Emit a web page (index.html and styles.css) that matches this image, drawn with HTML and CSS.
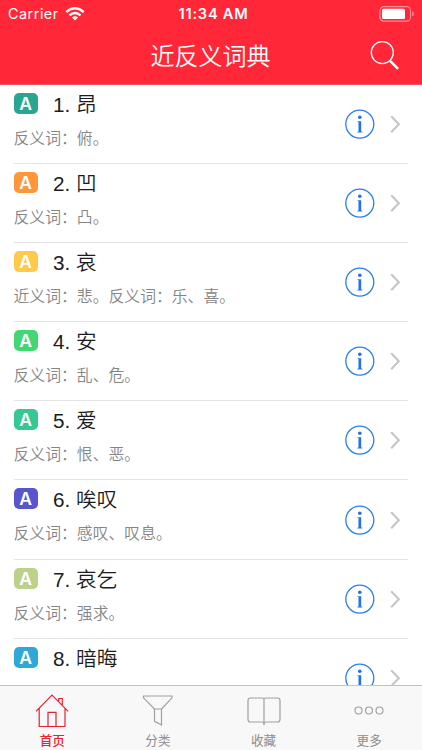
FILE: index.html
```html
<!DOCTYPE html>
<html lang="zh-CN">
<head>
<meta charset="utf-8">
<title>近反义词典</title>
<link rel="stylesheet" href="styles.css">
</head>
<body>
<svg class="defs" width="0" height="0">
  <symbol id="info" viewBox="0 0 30 30">
    <circle cx="14.8" cy="15.1" r="14" fill="none" stroke="#2b7de9" stroke-width="1.3"/>
    <circle cx="14.8" cy="8.3" r="1.8" fill="#1f73e3"/>
    <path d="M12.4 12.2H16.2V22.5L17.3 22.8V23.4H12.4V22.8L13.5 22.5V13.1L12.4 12.8Z" fill="#1f73e3"/>
  </symbol>
  <symbol id="chevron" viewBox="0 0 12 20">
    <path d="M1.2 2.2L8.8 10.2L1.2 18.2" fill="none" stroke="#c5c5ca" stroke-width="2.1"/>
  </symbol>
</svg>
<div class="app">
  <header class="header">
    <div class="status">
      <div class="carrier"><span>Carrier</span>
        <svg width="20" height="14" viewBox="0 0 20 14" fill="none" stroke="#fff" stroke-width="2.4"><path d="M1.3 5.1Q10 -2.4 18.7 5.1"/><path d="M4.5 8.4Q10 3.6 15.5 8.4"/><path d="M6.9 10.5Q10 7.9 13.1 10.5L10 13.5Z" fill="#fff" stroke="none"/></svg>
      </div>
      <div class="time">11:34 AM</div>
      <svg class="battery" width="36" height="16" viewBox="0 0 36 16"><rect x="1" y=".7" width="30.5" height="14.4" rx="3.8" fill="none" stroke="#ff8c96" stroke-width="1.2"/><rect x="3" y="2.7" width="23" height="10.4" rx="1.5" fill="#fff"/><path d="M33.1 5.3Q35 6.2 35 7.9T33.1 10.5Z" fill="#ff8c96"/></svg>
    </div>
    <div class="navbar">
      <h1>近反义词典</h1>
      <svg class="search" width="30" height="31" viewBox="0 0 30 31" fill="none" stroke="#fff"><circle cx="12.3" cy="12.6" r="11" stroke-width="1.3"/><path d="M19.8 20.6L28.1 28.8" stroke-width="2.5"/></svg>
    </div>
  </header>
  <main class="list">
    <article class="row"><div class="text"><div class="head"><span class="badge teal">A</span><h2>1. 昂</h2></div><p>反义词：俯。</p></div><svg class="info"><use href="#info"/></svg><svg class="chev"><use href="#chevron"/></svg></article>
    <article class="row"><div class="text"><div class="head"><span class="badge orange">A</span><h2>2. 凹</h2></div><p>反义词：凸。</p></div><svg class="info"><use href="#info"/></svg><svg class="chev"><use href="#chevron"/></svg></article>
    <article class="row"><div class="text"><div class="head"><span class="badge yellow">A</span><h2>3. 哀</h2></div><p>近义词：悲。反义词：乐、喜。</p></div><svg class="info"><use href="#info"/></svg><svg class="chev"><use href="#chevron"/></svg></article>
    <article class="row"><div class="text"><div class="head"><span class="badge green">A</span><h2>4. 安</h2></div><p>反义词：乱、危。</p></div><svg class="info"><use href="#info"/></svg><svg class="chev"><use href="#chevron"/></svg></article>
    <article class="row"><div class="text"><div class="head"><span class="badge mint">A</span><h2>5. 爱</h2></div><p>反义词：恨、恶。</p></div><svg class="info"><use href="#info"/></svg><svg class="chev"><use href="#chevron"/></svg></article>
    <article class="row"><div class="text"><div class="head"><span class="badge purple">A</span><h2>6. 唉叹</h2></div><p>反义词：感叹、叹息。</p></div><svg class="info"><use href="#info"/></svg><svg class="chev"><use href="#chevron"/></svg></article>
    <article class="row"><div class="text"><div class="head"><span class="badge lime">A</span><h2>7. 哀乞</h2></div><p>反义词：强求。</p></div><svg class="info"><use href="#info"/></svg><svg class="chev"><use href="#chevron"/></svg></article>
    <article class="row"><div class="text"><div class="head"><span class="badge blue">A</span><h2>8. 暗晦</h2></div></div><svg class="info"><use href="#info"/></svg><svg class="chev"><use href="#chevron"/></svg></article>
  </main>
  <nav class="tabs">
    <a class="tab active"><svg width="36" height="36" viewBox="0 0 36 36"><path d="M2 19.4L18 3L34.2 19.4M5.2 16.5V34.5H31V16.5M14 34.5V20.3H22V34.5M24.7 9V6.5H28.3V13"/></svg><span>首页</span></a>
    <a class="tab"><svg width="36" height="36" viewBox="0 0 36 36"><path d="M3.5 4H32V5.8L21.5 17V33L14.5 29.3V17L3.5 5.8ZM14.5 17H21.5"/></svg><span>分类</span></a>
    <a class="tab"><svg width="36" height="36" viewBox="0 0 36 36"><path d="M18 7.5Q18 6 16.2 6H4.5Q2 6 2 8.5V27.5Q2 30 4.5 30H15.8Q17.5 30 18 31.8Q18.5 30 20.2 30H31.5Q34 30 34 27.5V8.5Q34 6 31.5 6H19.8Q18 6 18 7.5V33"/></svg><span>收藏</span></a>
    <a class="tab"><svg width="36" height="36" viewBox="0 0 36 36"><circle cx="7.5" cy="18.5" r="3.5"/><circle cx="18" cy="18.5" r="3.5"/><circle cx="28.5" cy="18.5" r="3.5"/></svg><span>更多</span></a>
  </nav>
</div>
</body>
</html>
```
FILE: styles.css
```css
* { box-sizing: border-box; }
body { margin: 0; font-family: "Liberation Sans", "Noto Sans CJK SC", sans-serif; background: #fff; }
svg { display: block; flex: none; }
.defs { position: absolute; }
h1, h2, p { margin: 0; font-weight: 350; white-space: nowrap; }
.app { width: 422px; height: 750px; display: flex; flex-direction: column; overflow: hidden; }
.header { height: 84.5px; flex: none; background: #ff2738; color: #fff; border-bottom: 1px solid #e95566; }
.status { height: 28px; display: grid; grid-template-columns: 1fr auto 1fr; align-items: center; padding: 0 7px 0 8px; font-family: Inter, sans-serif; font-size: 14.4px; line-height: 28px; }
.carrier { display: flex; align-items: center; gap: 6px; letter-spacing: .5px; }
.time { margin-left: 4px; font-weight: 600; font-size: 14.6px; letter-spacing: .75px; }
.battery { justify-self: end; }
.navbar { height: 55px; display: grid; grid-template-columns: 1fr auto 1fr; align-items: center; padding-right: 22px; padding-left: 21px; }
.navbar h1 { grid-column: 2; margin-top: -2px; font-family: "Noto Sans CJK SC", sans-serif; font-size: 24px; line-height: 36px; }
.search { justify-self: end; }
.list { flex: 1; min-height: 0; overflow: hidden; }
.row { height: 79.2px; margin: 0 14px 0 13.5px; display: flex; align-items: center; border-bottom: 1px solid #e3e3e5; }
.text { flex: 1; align-self: stretch; padding-top: 4px; }
.head { display: flex; align-items: center; height: 32px; gap: 15.5px; }
.badge { width: 24px; height: 21px; margin-top: -3px; border-radius: 5px; color: #fff; font-family: Inter, sans-serif; font-weight: 600; font-size: 17.5px; line-height: 21px; text-align: center; }
.teal { background: #2aa591; }
.orange { background: #ff9637; }
.yellow { background: #ffc94a; }
.green { background: #43d774; }
.mint { background: #35c892; }
.purple { background: #5855ce; }
.lime { background: #bdd18a; }
.blue { background: #30a8d7; }
h2 { font-size: 20.7px; line-height: 32px; color: #1c1c1c; }
.text p { margin-top: 5px; font-family: "Noto Sans CJK SC", sans-serif; font-size: 15.83px; line-height: 24px; color: #858585; }
.info { width: 30px; height: 30px; }
.chev { width: 12px; height: 20px; margin: 0 6px 0 15px; }
.tabs { height: 65.5px; flex: none; display: grid; grid-template-columns: repeat(4, 1fr); margin-left: -.6px; border-top: 1px solid #c4c2c4; background: #f8f8f9; }
.tab { display: flex; flex-direction: column; align-items: center; padding-top: 6px; color: #8e8e8e; font-family: "Noto Sans CJK SC", sans-serif; font-size: 12.6px; line-height: 18px; }
.tab svg { fill: none; stroke: #a0a0a0; stroke-width: 1.2; }
.tab span { margin-top: 3px; }
.tab.active { color: #e8222d; font-weight: 500; }
.tab.active svg { stroke: #e8222d; }
```
